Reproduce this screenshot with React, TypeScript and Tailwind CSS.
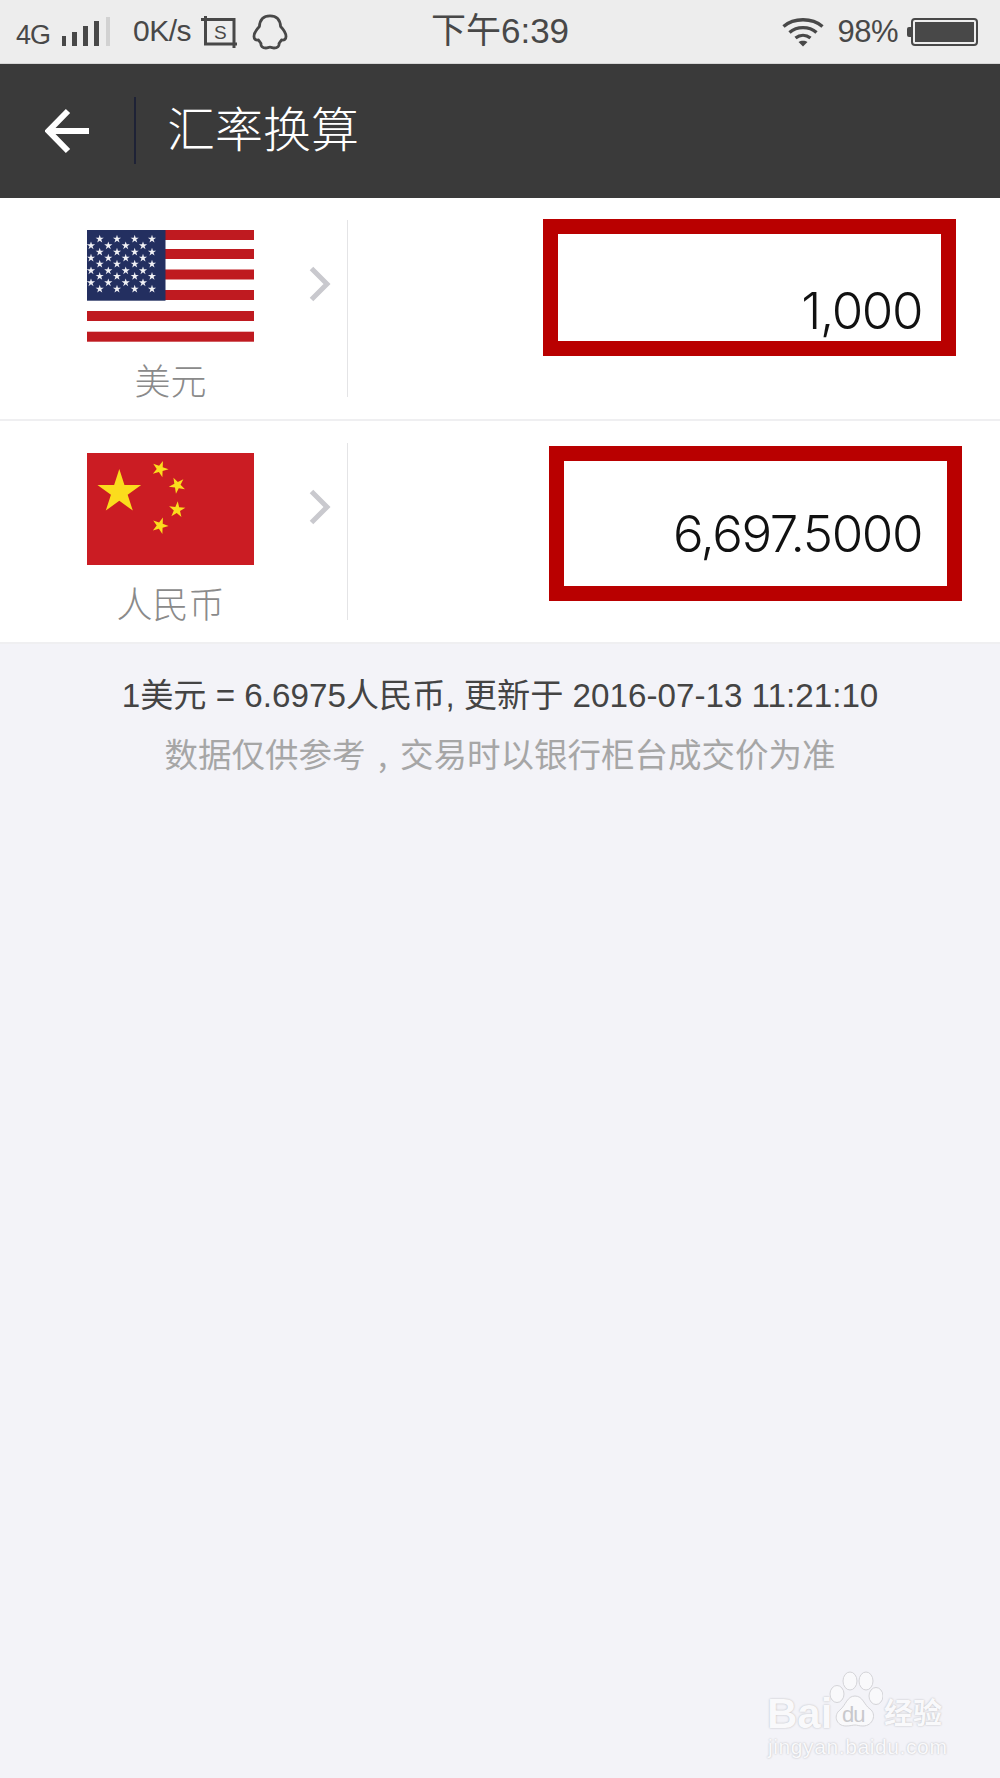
import React from 'react';

const CJK = "font-['Liberation_Sans','Noto_Sans_CJK_SC',sans-serif]";

function starPoints(cx: number, cy: number, r: number, rotate = 0) {
    const pts: string[] = [];
    for (let i = 0; i < 10; i++) {
        const radius = i % 2 === 0 ? r : r * 0.382;
        const a = ((-90 + rotate + i * 36) * Math.PI) / 180;
        pts.push(`${(cx + radius * Math.cos(a)).toFixed(2)},${(cy + radius * Math.sin(a)).toFixed(2)}`);
    }
    return pts.join(' ');
}

function UsFlag() {
    const reds = [0, 19, 39.5, 60, 81, 101.7];
    const rowsA = [9, 22, 34, 46.3, 59];
    const rowsB = [15.7, 28, 40.7, 52.7];
    return (
        <svg width="167" height="112" viewBox="0 0 167 112" className="block">
            <rect width="167" height="112" fill="#ffffff" />
            {reds.map((y) => (
                <rect key={y} x="0" y={y} width="167" height="10" fill="#bf1a20" />
            ))}
            <rect width="78.5" height="70.7" fill="#232f60" />
            {rowsA.map((y) =>
                [12.7, 30, 47.7, 65].map((x) => <polygon key={`${x}-${y}`} points={starPoints(x, y, 4.3)} fill="#f0f0f4" />)
            )}
            {rowsB.map((y) =>
                [4, 21.3, 38.7, 56].map((x) => <polygon key={`${x}-${y}`} points={starPoints(x, y, 4.3)} fill="#f0f0f4" />)
            )}
        </svg>
    );
}

function CnFlag() {
    return (
        <svg width="167" height="112" viewBox="0 0 167 112" className="block">
            <rect width="167" height="112" fill="#cb1c23" />
            <polygon points={starPoints(32.3, 39, 23)} fill="#fbdc1d" />
            <polygon points={starPoints(73, 16, 8.6, 20)} fill="#fbdc1d" />
            <polygon points={starPoints(90.3, 32.3, 8.6, 45)} fill="#fbdc1d" />
            <polygon points={starPoints(90, 56.7, 8.6, 5)} fill="#fbdc1d" />
            <polygon points={starPoints(73, 72.7, 8.6, 20)} fill="#fbdc1d" />
        </svg>
    );
}

function Chevron() {
    return (
        <svg width="22" height="36" viewBox="0 0 22 36" className="block">
            <path d="M2.5 2.5 L18 18 L2.5 33.5" fill="none" stroke="#c9c9ce" strokeWidth="5" />
        </svg>
    );
}

function SignalBars() {
    const bars = [
        { x: 0, y: 19, w: 4 },
        { x: 10, y: 15, w: 5 },
        { x: 21, y: 9, w: 5 },
        { x: 32, y: 4, w: 5 },
    ];
    return (
        <svg width="48" height="30" viewBox="0 0 48 30" className="block">
            {bars.map((b) => (
                <rect key={b.x} x={b.x} y={b.y} width={b.w} height={29 - b.y} fill="#484848" />
            ))}
            <rect x="44" y="0" width="4" height="29" fill="#d2d2d2" />
        </svg>
    );
}

function ScreenshotIcon() {
    return (
        <div className="relative w-[36px] h-[34px] shrink-0">
            <svg width="36" height="34" viewBox="0 0 36 34" className="block">
                <path d="M0 4.5 H33 V33 M4.5 1 V29 H36" fill="none" stroke="#484848" strokeWidth="3" />
            </svg>
            <span className="absolute left-[13px] top-[8px] text-[19px] leading-[20px] text-[#484848] font-['Liberation_Sans',sans-serif]">S</span>
        </div>
    );
}

function QqIcon() {
    return (
        <svg width="36" height="36" viewBox="0 0 36 36" className="block">
            <path
                d="M18 1.8 C11 1.8 7.8 6.5 7.4 12.5 C4.5 15.5 2 19 2 22.5 C2 25 3.5 26.5 6.5 26 C7.5 27.5 8 28.5 9 29.5 C8.5 32 10.5 34 14 34 C15.5 34 16.5 33.2 18 33.2 C19.5 33.2 20.5 34 22 34 C25.5 34 27.5 32 27 29.5 C28 28.5 28.5 27.5 29.5 26 C32.5 26.5 34 25 34 22.5 C34 19 31.5 15.5 28.6 12.5 C28.2 6.5 25 1.8 18 1.8 Z"
                fill="none"
                stroke="#484848"
                strokeWidth="2.8"
                strokeLinejoin="round"
            />
        </svg>
    );
}

function WifiIcon() {
    return (
        <svg width="42" height="30" viewBox="0 0 42 30" className="block">
            <g fill="none" stroke="#484848" strokeWidth="3.4">
                <path d="M1.5 9.5 C12 0.5 30 0.5 40.5 9.5" />
                <path d="M7.5 15.5 C15 9 27 9 34.5 15.5" />
                <path d="M13.5 21 C18 17.5 24 17.5 28.5 21" />
            </g>
            <path d="M16.5 25 C19 23.3 23 23.3 25.5 25 L21 29.5 Z" fill="#484848" />
        </svg>
    );
}

function BatteryIcon() {
    return (
        <div className="flex items-center shrink-0">
            <div className="w-[4px] h-[10px] bg-[#484848] rounded-l-[2px]" />
            <div className="w-[67px] h-[28px] border-2 border-[#484848] rounded-[4px] p-[2px]">
                <div className="w-full h-full bg-[#484848]" />
            </div>
        </div>
    );
}

function StatusBar() {
    return (
        <div className={`h-[64px] shrink-0 bg-[#ededed] border-b border-[#d6d6d6] grid grid-cols-[1fr_auto_1fr] items-center text-[#484848] ${CJK}`}>
            <div className="flex items-center pl-[16px]">
                <span className="text-[27px] leading-none mt-[8px] tracking-[-1px] w-[46px]">4G</span>
                <SignalBars />
                <span className="text-[30px] leading-none ml-[23px] tracking-[-0.5px] w-[68px] mt-[-2px]">0K/s</span>
                <ScreenshotIcon />
                <div className="ml-[15px]">
                    <QqIcon />
                </div>
            </div>
            <span className="text-[35px] leading-none mt-[-3px]">下午6:39</span>
            <div className="flex items-center justify-end pr-[22px]">
                <WifiIcon />
                <span className="text-[31px] leading-none ml-[13px] mr-[9px] tracking-[-0.5px]">98%</span>
                <BatteryIcon />
            </div>
        </div>
    );
}

function Header() {
    return (
        <div className="h-[134px] shrink-0 bg-[#3a3a3a] flex items-center pl-[45px]">
            <svg width="46" height="46" viewBox="0 0 46 46" className="block shrink-0">
                <path d="M44 23 H4 M23 3 L3.5 23 L23 43" fill="none" stroke="#ffffff" strokeWidth="6" />
            </svg>
            <div className="w-[2px] h-[67px] bg-[#1e2236] ml-[43px] mt-[-2px]" />
            <h1 className="ml-[31px] text-[48px] leading-none text-white font-['Noto_Sans_CJK_SC',sans-serif] font-light mt-[-10px]">汇率换算</h1>
        </div>
    );
}

interface CurrencyRowProps {
    flag: React.ReactNode;
    name: string;
    value: string;
    boxClass: string;
}

function CurrencyRow({ flag, name, value, boxClass }: CurrencyRowProps) {
    return (
        <div className="h-[221px] bg-white flex items-start border-b-2 border-[#efeff1] box-content">
            <div className="w-[348px] h-[177px] mt-[22px] border-r border-[#e4e4e6] shrink-0 pl-[87px] pt-[10px] relative">
                {flag}
                <div className="w-[167px] text-center text-[36px] leading-none mt-[19px] text-[#8a8a8a] font-['Noto_Sans_CJK_SC',sans-serif] font-light">{name}</div>
                <div className="absolute left-[309px] top-[46px]">
                    <Chevron />
                </div>
            </div>
            <div className={`ml-auto border-[15px] border-[#b90000] w-[413px] flex justify-end items-end bg-white ${boxClass}`}>
                <span className="text-[51px] leading-none tracking-[-1.4px] text-[#111111] font-['Inter',sans-serif] font-light">{value}</span>
            </div>
        </div>
    );
}

function Watermark() {
    return (
        <div className="absolute left-[762px] top-[1670px] w-[185px] h-[92px] select-none">
            <div className="absolute left-[5px] top-[28px] text-[42px] leading-[32px] font-bold text-[#f9f9fb] font-['Liberation_Sans',sans-serif] [text-shadow:0_0_2px_#b4b4b8]">Bai</div>
            <svg width="56" height="62" viewBox="0 0 56 62" className="absolute left-[65px] top-[0px]">
                <g fill="#f9f9fb" stroke="#d4d4d8" strokeWidth="1">
                    <ellipse cx="10" cy="24" rx="7" ry="8.5" />
                    <ellipse cx="23" cy="11" rx="7" ry="9" />
                    <ellipse cx="39" cy="11" rx="7" ry="9" />
                    <ellipse cx="49" cy="26" rx="7" ry="8.5" />
                    <path d="M28 26 C36 26 37 35 43 39 C50 44 46 56 36 56 C32 56 30 55 28 55 C26 55 23 56 19 56 C9 56 6 45 13 40 C19 35 20 26 28 26 Z" />
                </g>
            </svg>
            <div className="absolute left-[80px] top-[35px] text-[22px] leading-[20px] text-[#c8c8cc] font-['Liberation_Sans',sans-serif] tracking-[-1px]">du</div>
            <div className="absolute left-[122px] top-[25px] text-[29px] leading-[32px] font-bold text-[#f9f9fb] font-['Noto_Sans_CJK_SC',sans-serif] [text-shadow:0_0_2px_#b4b4b8]">经验</div>
            <div className="absolute left-[6px] top-[65px] text-[21px] leading-[24px] text-[#f9f9fb] font-['Liberation_Sans',sans-serif] tracking-[0.6px] whitespace-nowrap [text-shadow:0_0_2px_#b4b4b8]">jingyan.baidu.com</div>
        </div>
    );
}

export default function App() {
    return (
        <div className="relative w-[1000px] h-[1778px] overflow-hidden bg-[#f3f3f8] flex flex-col">
            <StatusBar />
            <Header />
            <CurrencyRow
                flag={<UsFlag />}
                name="美元"
                value="1,000"
                boxClass="h-[137px] mr-[44px] mt-[21px] pr-[19px] pb-[5px]"
            />
            <CurrencyRow
                flag={<CnFlag />}
                name="人民币"
                value="6,697.5000"
                boxClass="h-[155px] mr-[38px] mt-[25px] pr-[25px] pb-[27px]"
            />
            <div className={`text-center pt-[32px] ${CJK}`}>
                <p className="text-[33.2px] leading-[40px] text-[#444444]">1美元 = 6.6975人民币, 更新于 2016-07-13 11:21:10</p>
                <p className="text-[33.5px] leading-[40px] mt-[17px] text-[#a6a6a6] [word-spacing:5px] font-['Noto_Sans_CJK_SC',sans-serif]">数据仅供参考 , 交易时以银行柜台成交价为准</p>
            </div>
            <Watermark />
        </div>
    );
}
